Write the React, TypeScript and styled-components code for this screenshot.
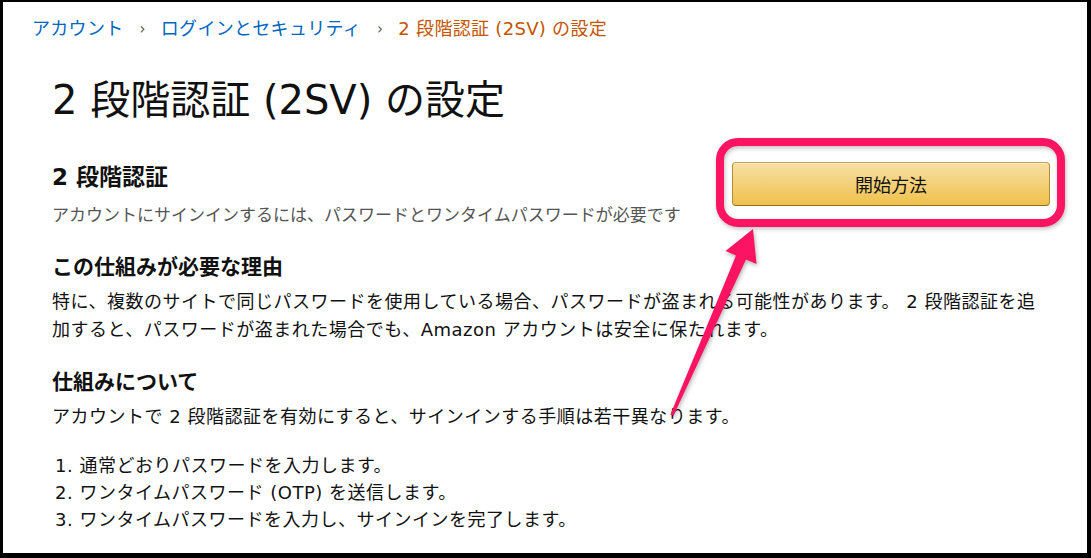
import React from "react";
import styled, { createGlobalStyle } from "styled-components";

const Global = createGlobalStyle`
  html, body {
    margin: 0;
    padding: 0;
    background: #000;
  }
  * { box-sizing: border-box; }
`;

const FONT = `"DejaVu Sans", "Noto Sans CJK JP", sans-serif`;

const Page = styled.div`
  width: 1091px;
  height: 558px;
  padding: 2px 4px 5px 3px;
  background: #000;
`;

const Panel = styled.div`
  position: relative;
  height: 551px;
  background: #fff;
  padding: 15px 37px 0 29px;
  font-family: ${FONT};
  color: #111;
  overflow: hidden;
`;

const Breadcrumb = styled.nav`
  display: flex;
  align-items: center;
  font-size: 18px;
  line-height: 24px;
  letter-spacing: 0.3px;
`;

const Crumb = styled.a`
  color: #0066c0;
  text-decoration: none;
`;

const Sep = styled.span`
  color: #555;
  font-size: 15px;
  margin: 0 15px 0 16px;
`;

const Current = styled.span`
  color: #c45500;
`;

const Content = styled.main`
  padding-left: 20px;
`;

const Title = styled.h1`
  margin: 35px 0 0;
  font-size: 40px;
  line-height: 48px;
  font-weight: 400;
  color: #111;
`;

const TopRow = styled.div`
  display: flex;
  justify-content: space-between;
  align-items: flex-start;
  margin-top: 38px;
`;

const Heading = styled.h2<{ $top?: number; $size?: number }>`
  margin: ${(p) => p.$top ?? 0}px 0 0;
  font-size: ${(p) => p.$size ?? 21}px;
  line-height: 30px;
  font-weight: 700;
  color: #111;
`;

const Sub = styled.p`
  margin: 10px 0 0;
  font-size: 17px;
  line-height: 26px;
  color: #555;
`;

const StartButton = styled.button`
  width: 318px;
  height: 44px;
  border: 1px solid #a88734;
  border-color: #c4a34a #b08d36 #8d6e28;
  border-radius: 4px;
  background: linear-gradient(to bottom, #f7dfa5, #f0c14b);
  box-shadow: inset 0 1px 0 rgba(255, 255, 255, 0.4);
  font-family: ${FONT};
  font-size: 18px;
  color: #111;
  cursor: pointer;
`;

const Para = styled.p`
  margin: 6px 0 0;
  max-width: 990px;
  font-size: 18px;
  line-height: 28px;
  letter-spacing: 0.5px;
  color: #111;
`;

const Steps = styled.ol`
  margin: 21px 0 0;
  padding: 0 0 0 3px;
  list-style: none;
  font-size: 18px;
  line-height: 27px;
  letter-spacing: 0.5px;
  color: #111;
`;

const Highlight = styled.div`
  position: absolute;
  left: 713px;
  top: 136px;
  width: 349px;
  height: 89px;
  border: 8px solid #fc1462;
  border-radius: 22px;
  filter: drop-shadow(1px 2px 2px rgba(0, 0, 0, 0.25));
  pointer-events: none;
`;

const ArrowSvg = styled.svg`
  position: absolute;
  left: 0;
  top: 0;
  width: 1084px;
  height: 551px;
  pointer-events: none;
  filter: drop-shadow(1px 2px 2px rgba(0, 0, 0, 0.3));
`;

const steps = [
  "1. 通常どおりパスワードを入力します。",
  "2. ワンタイムパスワード (OTP) を送信します。",
  "3. ワンタイムパスワードを入力し、サインインを完了します。",
];

export default function App() {
  return (
    <>
      <Global />
      <Page>
        <Panel>
          <Breadcrumb>
            <Crumb href="#">アカウント</Crumb>
            <Sep>›</Sep>
            <Crumb href="#">ログインとセキュリティ</Crumb>
            <Sep>›</Sep>
            <Current>2 段階認証 (2SV) の設定</Current>
          </Breadcrumb>
          <Content>
            <Title>2 段階認証 (2SV) の設定</Title>
            <TopRow>
              <div>
                <Heading $size={23}>2 段階認証</Heading>
                <Sub>アカウントにサインインするには、パスワードとワンタイムパスワードが必要です</Sub>
              </div>
              <StartButton>開始方法</StartButton>
            </TopRow>
            <Heading $top={24}>この仕組みが必要な理由</Heading>
            <Para>
              特に、複数のサイトで同じパスワードを使用している場合、パスワードが盗まれる可能性があります。 2 段階認証を追加すると、パスワードが盗まれた場合でも、Amazon アカウントは安全に保たれます。
            </Para>
            <Heading $top={23}>仕組みについて</Heading>
            <Para>アカウントで 2 段階認証を有効にすると、サインインする手順は若干異なります。</Para>
            <Steps>
              {steps.map((s) => (
                <li key={s}>{s}</li>
              ))}
            </Steps>
          </Content>
          <Highlight />
          <ArrowSvg viewBox="0 0 1084 551">
            <polygon
              fill="#fc1462"
              points="750,227 753.5,262 743,257.5 670.6,413.6 667.4,412.4 733,253.5 722.5,249"
            />
          </ArrowSvg>
        </Panel>
      </Page>
    </>
  );
}
